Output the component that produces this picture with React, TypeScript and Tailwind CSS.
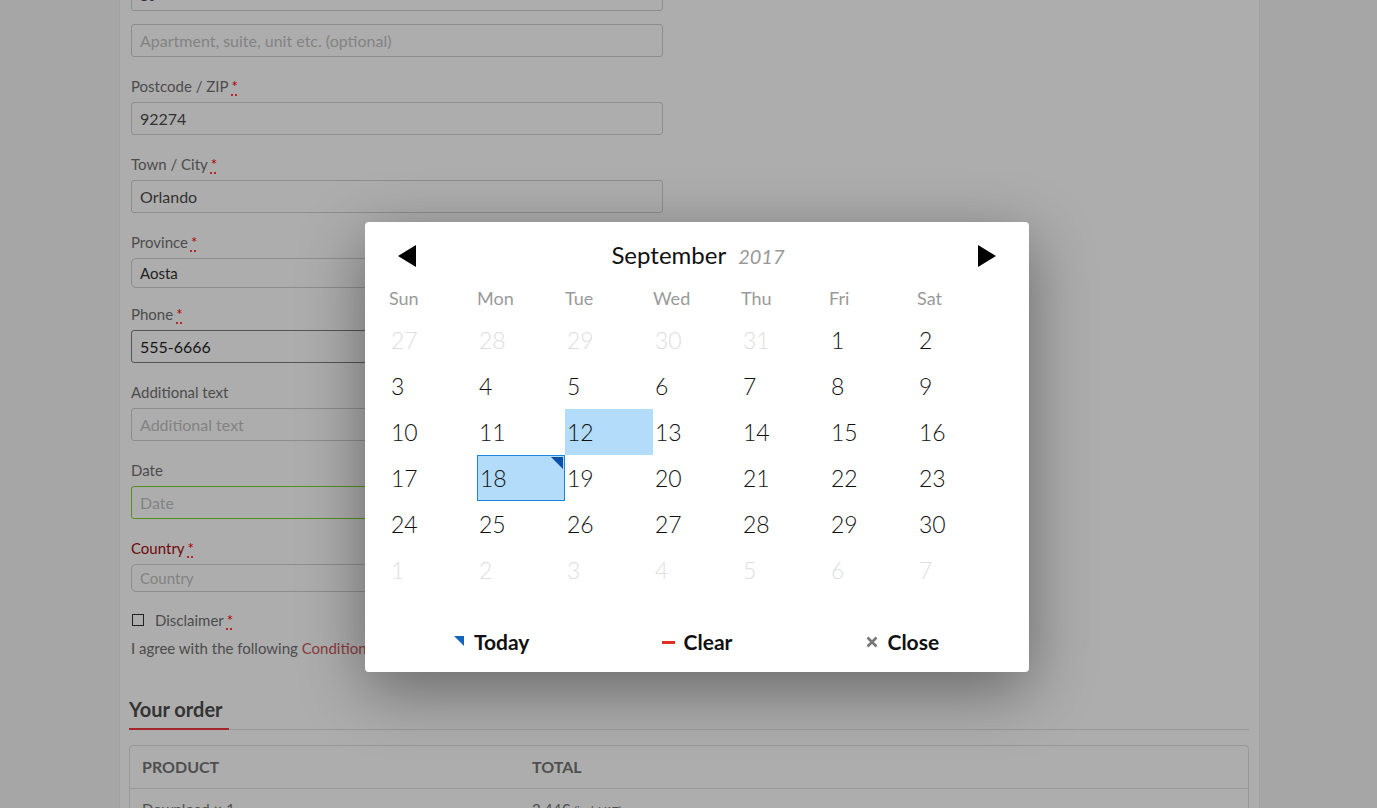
import React from "react";

const font = { fontFamily: "Lato, 'Noto Sans', sans-serif" };

function Req() {
  return (
    <span className="ml-[3px] text-[#b00000] underline decoration-dotted decoration-[#b00000] underline-offset-[3px]">*</span>
  );
}

function Label({ children, req, red }: { children: React.ReactNode; req?: boolean; red?: boolean }) {
  return (
    <div className={`h-[22px] leading-[22px] text-[15px] ${red ? "text-[#6e0a0a]" : "text-[#4c4c4c]"}`}>
      {children}
      {req && <Req />}
    </div>
  );
}

function Input({ value, placeholder, cls = "", h = "h-[33px]" }: { value?: string; placeholder?: string; cls?: string; h?: string }) {
  return (
    <div
      className={`${h} w-[532px] rounded-[3px] border border-[#8d8d8d] flex items-center px-[8px] text-[16px] ${
        value ? "text-[#333]" : "text-[#838383]"
      } ${cls}`}
    >
      {value ?? placeholder}
    </div>
  );
}

const prevDays = [27, 28, 29, 30, 31];
const weeks: { d: number; o?: boolean }[][] = (() => {
  const all: { d: number; o?: boolean }[] = [];
  prevDays.forEach((d) => all.push({ d, o: true }));
  for (let i = 1; i <= 30; i++) all.push({ d: i });
  for (let i = 1; i <= 7; i++) all.push({ d: i, o: true });
  const w: { d: number; o?: boolean }[][] = [];
  for (let i = 0; i < 6; i++) w.push(all.slice(i * 7, i * 7 + 7));
  return w;
})();

function Calendar() {
  return (
    <div
      className="absolute left-[365px] top-[222px] w-[664px] h-[450px] bg-white rounded-[4px] shadow-[0_18px_64px_rgba(0,0,0,0.4)] px-[24px] pt-[12px]"
      style={font}
    >
      <div className="h-[44px] flex items-center justify-between px-[9px]">
        <svg width="18" height="22" viewBox="0 0 18 22">
          <polygon points="18,0 18,22 0,11" fill="#000" />
        </svg>
        <div className="flex items-baseline gap-[12px] ml-[2px] -mt-[2px]">
          <span className="text-[24px] text-[#111]">September</span>
          <span className="text-[20px] italic text-[#999]">2017</span>
        </div>
        <svg width="18" height="22" viewBox="0 0 18 22">
          <polygon points="0,0 18,11 0,22" fill="#000" />
        </svg>
      </div>
      <div className="grid grid-cols-7 h-[39px] items-center">
        {["Sun", "Mon", "Tue", "Wed", "Thu", "Fri", "Sat"].map((d) => (
          <div key={d} className="text-[18px] text-[#9a9a9a] pt-[1px]">
            {d}
          </div>
        ))}
      </div>
      <div className="grid grid-cols-7">
        {weeks.flat().map((c, i) => {
          const isSel = !c.o && c.d === 12;
          const isToday = !c.o && c.d === 18;
          return (
            <div
              key={i}
              className={`relative h-[46px] flex items-center pl-[2px] text-[23px] font-light ${
                c.o ? "text-[#dedede]" : "text-[#111]"
              } ${isSel ? "bg-[#b3dcfb]" : ""} ${isToday ? "bg-[#b3dcfb] border border-[#1a88e3] pl-[1px]" : ""}`}
            >
              {c.d}
              {isToday && (
                <svg className="absolute right-[1px] top-[1px]" width="12" height="12" viewBox="0 0 12 12">
                  <polygon points="0,0 12,0 12,12" fill="#0a4fa8" />
                </svg>
              )}
            </div>
          );
        })}
      </div>
      <div className="mt-[27px] h-[44px] grid grid-cols-3 items-center text-[21px] font-bold text-[#111]">
        <div className="flex items-center justify-center gap-[10px]">
          <svg width="10" height="10" viewBox="0 0 10 10" className="-mt-[3px]">
            <polygon points="0,0 10,0 10,10" fill="#1565c0" />
          </svg>
          <span>Today</span>
        </div>
        <div className="flex items-center justify-center gap-[9px]">
          <span className="block w-[13px] h-[3px] bg-[#e0301e]" />
          <span>Clear</span>
        </div>
        <div className="flex items-center justify-center gap-[10px]">
          <svg width="12" height="12" viewBox="0 0 12 12">
            <path d="M1.5 1.5 L10.5 10.5 M10.5 1.5 L1.5 10.5" stroke="#777" strokeWidth="2.6" />
          </svg>
          <span>Close</span>
        </div>
      </div>
    </div>
  );
}

export default function App() {
  return (
    <div className="relative w-[1377px] h-[808px] overflow-hidden flex bg-[#a6a6a6]" style={font}>
      <div className="w-[119px] shrink-0" />
      <div className="w-[1141px] shrink-0 bg-[#adadad] border-l border-r border-[#a1a1a1] px-[9px]">
        <div className="ml-[2px] -mt-[22px] flex flex-col">
          <Input value="St" />
          <div className="mt-[13px]">
            <Input placeholder="Apartment, suite, unit etc. (optional)" />
          </div>
          <div className="mt-[18px]">
            <Label req>Postcode / ZIP</Label>
          </div>
          <div className="mt-[5px]">
            <Input value="92274" />
          </div>
          <div className="mt-[18px]">
            <Label req>Town / City</Label>
          </div>
          <div className="mt-[5px]">
            <Input value="Orlando" />
          </div>
          <div className="mt-[18px]">
            <Label req>Province</Label>
          </div>
          <div className="mt-[5px]">
            <Input value="Aosta" h="h-[30px]" cls="rounded-[5px] !text-[#222] !text-[15px]" />
          </div>
          <div className="mt-[15px]">
            <Label req>Phone</Label>
          </div>
          <div className="mt-[5px]">
            <Input value="555-6666" cls="!border-[#555] !text-[#151515]" />
          </div>
          <div className="mt-[18px]">
            <Label>Additional text</Label>
          </div>
          <div className="mt-[5px]">
            <Input placeholder="Additional text" />
          </div>
          <div className="mt-[18px]">
            <Label>Date</Label>
          </div>
          <div className="mt-[5px]">
            <Input placeholder="Date" cls="!border-[#52901f]" />
          </div>
          <div className="mt-[18px]">
            <Label req red>
              Country
            </Label>
          </div>
          <div className="mt-[5px]">
            <Input placeholder="Country" h="h-[28px]" cls="rounded-[5px] !text-[15px]" />
          </div>
          <div className="mt-[17px] h-[22px] flex items-center text-[15px] text-[#4c4c4c]">
            <span className="ml-[1px] block w-[12px] h-[12px] border border-[#222]" />
            <span className="ml-[11px]">
              Disclaimer
              <Req />
            </span>
          </div>
          <div className="mt-[6px] h-[22px] leading-[22px] text-[15px] text-[#4c4c4c]">
            I agree with the following <span className="text-[#8a3b3b]">Conditions</span>
          </div>
        </div>
        <div className="mt-[38px] w-[1120px] border-b border-[#999]">
          <span className="inline-block -mb-[1px] border-b-2 border-[#a3262d] w-[100px] pb-[7px] h-[33px] leading-[24px] text-[20px] font-bold text-[#333]">
            Your order
          </span>
        </div>
        <div className="mt-[15px] w-[1120px] border border-[#999] rounded-[4px]">
          <div className="h-[43px] flex items-center border-b border-[#999] text-[16px] font-bold text-[#4f4f4f]">
            <div className="w-[390px] pl-[12px]">PRODUCT</div>
            <div className="pl-[12px]">TOTAL</div>
          </div>
          <div className="h-[40px] flex items-center text-[15px] text-[#505050]">
            <div className="w-[390px] pl-[12px]">Download × 1</div>
            <div className="pl-[12px]">
              2,44€ <span className="text-[11px]">(incl. VAT)</span>
            </div>
          </div>
        </div>
      </div>
      <div className="flex-1" />
      <Calendar />
    </div>
  );
}
